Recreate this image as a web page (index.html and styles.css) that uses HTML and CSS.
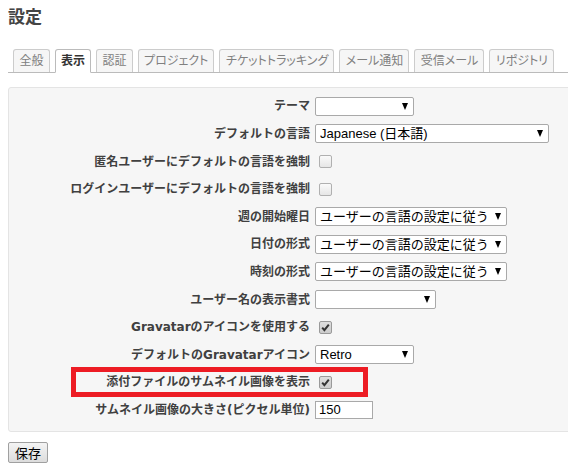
FILE: index.html
```html
<!DOCTYPE html>
<html lang="ja">
<head>
<meta charset="utf-8">
<title>設定</title>
<link rel="stylesheet" href="styles.css">
</head>
<body>
<div class="page">
  <h2 class="title">設定</h2>
  <div class="tabs">
    <ul>
      <li><a href="#">全般</a></li>
      <li><a href="#" class="selected">表示</a></li>
      <li><a href="#">認証</a></li>
      <li><a href="#">プロジェクト</a></li>
      <li><a href="#">チケットトラッキング</a></li>
      <li><a href="#">メール通知</a></li>
      <li><a href="#">受信メール</a></li>
      <li><a href="#">リポジトリ</a></li>
    </ul>
  </div>
  <form class="settings">
    <div class="box">
      <div class="row"><label for="s1">テーマ</label><span class="select w-theme"><select id="s1"><option></option></select></span></div>
      <div class="row"><label for="s2">デフォルトの言語</label><span class="select w-lang"><select id="s2"><option>Japanese (日本語)</option></select></span></div>
      <div class="row"><label for="c1">匿名ユーザーにデフォルトの言語を強制</label><span class="check" id="c1"></span></div>
      <div class="row"><label for="c2">ログインユーザーにデフォルトの言語を強制</label><span class="check" id="c2"></span></div>
      <div class="row"><label for="s3">週の開始曜日</label><span class="select w-user"><select id="s3"><option>ユーザーの言語の設定に従う</option></select></span></div>
      <div class="row"><label for="s4">日付の形式</label><span class="select w-user"><select id="s4"><option>ユーザーの言語の設定に従う</option></select></span></div>
      <div class="row"><label for="s5">時刻の形式</label><span class="select w-user"><select id="s5"><option>ユーザーの言語の設定に従う</option></select></span></div>
      <div class="row"><label for="s6">ユーザー名の表示書式</label><span class="select w-name"><select id="s6"><option></option></select></span></div>
      <div class="row"><label for="c3">Gravatarのアイコンを使用する</label><span class="check checked" id="c3"><svg viewBox="0 0 13 13" width="13" height="13"><path d="M3.2 6.6 L5.4 9.2 L9.8 3.6" fill="none" stroke="#333" stroke-width="2"/></svg></span></div>
      <div class="row"><label for="s7">デフォルトのGravatarアイコン</label><span class="select w-theme"><select id="s7"><option>Retro</option></select></span></div>
      <div class="row"><label for="c4">添付ファイルのサムネイル画像を表示</label><span class="check checked" id="c4"><svg viewBox="0 0 13 13" width="13" height="13"><path d="M3.2 6.6 L5.4 9.2 L9.8 3.6" fill="none" stroke="#333" stroke-width="2"/></svg></span><div class="highlight"></div></div>
      <div class="row"><label for="t1">サムネイル画像の大きさ(ピクセル単位)</label><input type="text" id="t1" class="text" value="150"></div>
    </div>
    <button type="button" class="save">保存</button>
  </form>
</div>
</body>
</html>
```
FILE: styles.css
```css
html, body {
  margin: 0;
  padding: 0;
  overflow: hidden;
  background: #fff;
}
body {
  font-family: "Liberation Sans", "Noto Sans CJK JP", sans-serif;
  color: #484848;
}
.page {
  width: 640px;
  padding: 9px 0 0 8px;
}
.title {
  margin: 0;
  font-size: 17px;
  line-height: 17px;
  font-weight: bold;
  color: #444;
}
.tabs {
  margin-top: 23px;
}
.tabs ul {
  list-style: none;
  margin: 0;
  padding: 0 0 0 5px;
  display: flex;
  align-items: flex-end;
  gap: 5px;
  border-bottom: 1px solid #bbb;
}
.tabs li a {
  display: block;
  padding: 4px 5px 4px 5.5px;
  font-size: 12px;
  line-height: 14px;
  font-feature-settings: "palt";
  color: #808080;
  text-decoration: none;
  background: #f6f6f6;
  border: 1px solid #ccc;
  border-bottom: none;
  border-radius: 3px 3px 0 0;
}
.tabs li a.selected {
  background: #fff;
  color: #333;
  font-weight: bold;
  border-color: #bbb;
  border-bottom: 1px solid #fff;
  margin-bottom: -1px;
}
.settings {
  margin-top: 14px;
}
.box {
  position: relative;
  background: #f6f6f6;
  border: 1px solid #e4e4e4;
  border-radius: 3px;
  padding: 4.6px 6px 7.2px 6px;
}
.row {
  position: relative;
  display: grid;
  grid-template-columns: 295px auto;
  column-gap: 5px;
  align-items: center;
  justify-items: start;
  height: 27.6px;
}
.row label {
  justify-self: end;
  font-family: "DejaVu Sans", "Noto Sans CJK JP", sans-serif;
  font-size: 12px;
  line-height: 16px;
  font-weight: bold;
  color: #404040;
  white-space: nowrap;
}
.select {
  position: relative;
  display: inline-block;
  height: 19px;
}
.select::after {
  content: "";
  position: absolute;
  right: 6px;
  top: 6px;
  border-left: 3.5px solid transparent;
  border-right: 3.5px solid transparent;
  border-top: 7px solid #000;
  pointer-events: none;
}
.select select {
  appearance: none;
  -webkit-appearance: none;
  display: block;
  width: 100%;
  height: 19px;
  margin: 0;
  padding: 0 0 0 4px;
  border: 1px solid #a9a9a9;
  border-radius: 2px;
  background: #fff;
  color: #000;
  font-family: "Liberation Sans", "Noto Sans CJK JP", sans-serif;
  font-size: 13px;
  line-height: 17px;
}
.w-theme { width: 99px; }
.w-lang { width: 234px; }
.w-user { width: 192px; }
.w-name { width: 121px; }
.check {
  display: block;
  box-sizing: border-box;
  width: 13px;
  height: 13px;
  margin-left: 4px;
  border: 1px solid #b0b0b0;
  border-radius: 2px;
  background: linear-gradient(#fafafa, #e6e6e6);
}
.check svg {
  display: block;
  margin: -1px;
}
.check.checked {
  border-color: #9a9a9a;
  background: linear-gradient(#dedede, #cccccc);
}
.text {
  box-sizing: border-box;
  width: 58px;
  height: 18px;
  margin: 0;
  padding: 0 3px;
  border: 1px solid #a9a9a9;
  background: #fff;
  color: #000;
  font-family: "Liberation Sans", sans-serif;
  font-size: 13px;
}
.highlight {
  position: absolute;
  left: 56px;
  top: -2px;
  width: 297px;
  height: 30px;
  box-sizing: border-box;
  border: 5px solid #ed1c24;
  pointer-events: none;
}
.save {
  display: block;
  margin-top: 10px;
  box-sizing: border-box;
  width: 40px;
  height: 21px;
  padding: 0;
  border: 1px solid #a0a0a0;
  border-radius: 2px;
  background: linear-gradient(#f4f4f4, #dcdcdc);
  color: #000;
  font-family: "Noto Sans CJK JP", sans-serif;
  font-size: 13px;
  line-height: 19px;
}
```
